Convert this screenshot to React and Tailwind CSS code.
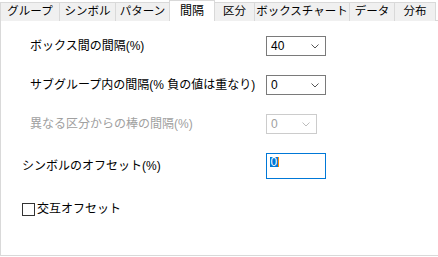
const tabs = [
  { label: 'グループ', w: 60 },
  { label: 'シンボル', w: 57 },
  { label: 'パターン', w: 55 },
  { label: '間隔', w: 46, active: true },
  { label: '区分', w: 41 },
  { label: 'ボックスチャート', w: 96 },
  { label: 'データ', w: 46 },
  { label: '分布', w: 42 },
];

function Chevron({ color = '#444' }) {
  return (
    <svg width="8" height="5" viewBox="0 0 8 5" className="shrink-0">
      <path d="M0.5 0.5 L4 4 L7.5 0.5" fill="none" stroke={color} strokeWidth="1" />
    </svg>
  );
}

function Select({ value, width = 'w-[60px]', disabled }) {
  return (
    <div
      className={`${width} h-[20px] flex items-center justify-between pl-[4px] pr-[6px] border ${
        disabled ? 'border-[#cccccc] text-[#a0a0a0]' : 'border-[#7a7a7a] text-black'
      }`}
    >
      <span className="text-[12px] leading-none">{value}</span>
      <Chevron color={disabled ? '#bdbdbd' : '#555'} />
    </div>
  );
}

export default function App() {
  return (
    <div className="w-[438px] h-[257px] bg-white overflow-hidden font-['Liberation_Sans','Noto_Sans_CJK_JP',sans-serif] text-[12px] text-black">
      {/* tab strip */}
      <div className="flex items-end h-[21px]">
        {tabs.map((t, i) =>
          t.active ? (
            <div
              key={t.label}
              style={{ width: t.w }}
              className="relative z-10 -ml-px h-[21px] bg-white border border-b-0 border-[#d9d9d9] flex items-center justify-center pb-[1px] text-[12px]"
            >
              {t.label}
            </div>
          ) : (
            <div
              key={t.label}
              style={{ width: t.w }}
              className={`h-[19px] bg-[#f0f0f0] border border-b-0 border-[#d9d9d9] flex items-center justify-center text-[11.5px] ${
                i === 0 ? '' : '-ml-px'
              }`}
            >
              {t.label}
            </div>
          )
        )}
      </div>

      {/* panel */}
      <div className="-mt-px w-[440px] h-[236px] border border-[#d9d9d9] flex flex-col pt-[15px]">
        <div className="flex items-center h-[20px]">
          <div className="w-[265px] pl-[29px]">ボックス間の間隔(%)</div>
          <Select value="40" />
        </div>
        <div className="flex items-center h-[20px] mt-[19px]">
          <div className="w-[265px] pl-[29px] whitespace-nowrap">サブグループ内の間隔(% 負の値は重なり)</div>
          <Select value="0" />
        </div>
        <div className="flex items-center h-[20px] mt-[19px]">
          <div className="w-[265px] pl-[29px] text-[#a0a0a0]">異なる区分からの棒の間隔(%)</div>
          <Select value="0" width="w-[51px]" disabled />
        </div>
        <div className="flex items-center h-[26px] mt-[19px]">
          <div className="w-[265px] pl-[21px]">シンボルのオフセット(%)</div>
          <div className="w-[60px] h-[26px] border border-[#0078d7] flex items-start pl-[3px] pt-[3px]">
            <span className="bg-[#0078d7] text-white text-[12px] leading-[10px] h-[10px] px-[0.5px]">0</span>
            <span className="w-[1px] h-[10px] bg-[#ff8c00]" />
          </div>
        </div>
        <label className="flex items-center mt-[21px] pl-[21px] gap-[2px]">
          <span className="w-[13px] h-[13px] border border-[#333333] bg-white" />
          <span>交互オフセット</span>
        </label>
      </div>
    </div>
  );
}
